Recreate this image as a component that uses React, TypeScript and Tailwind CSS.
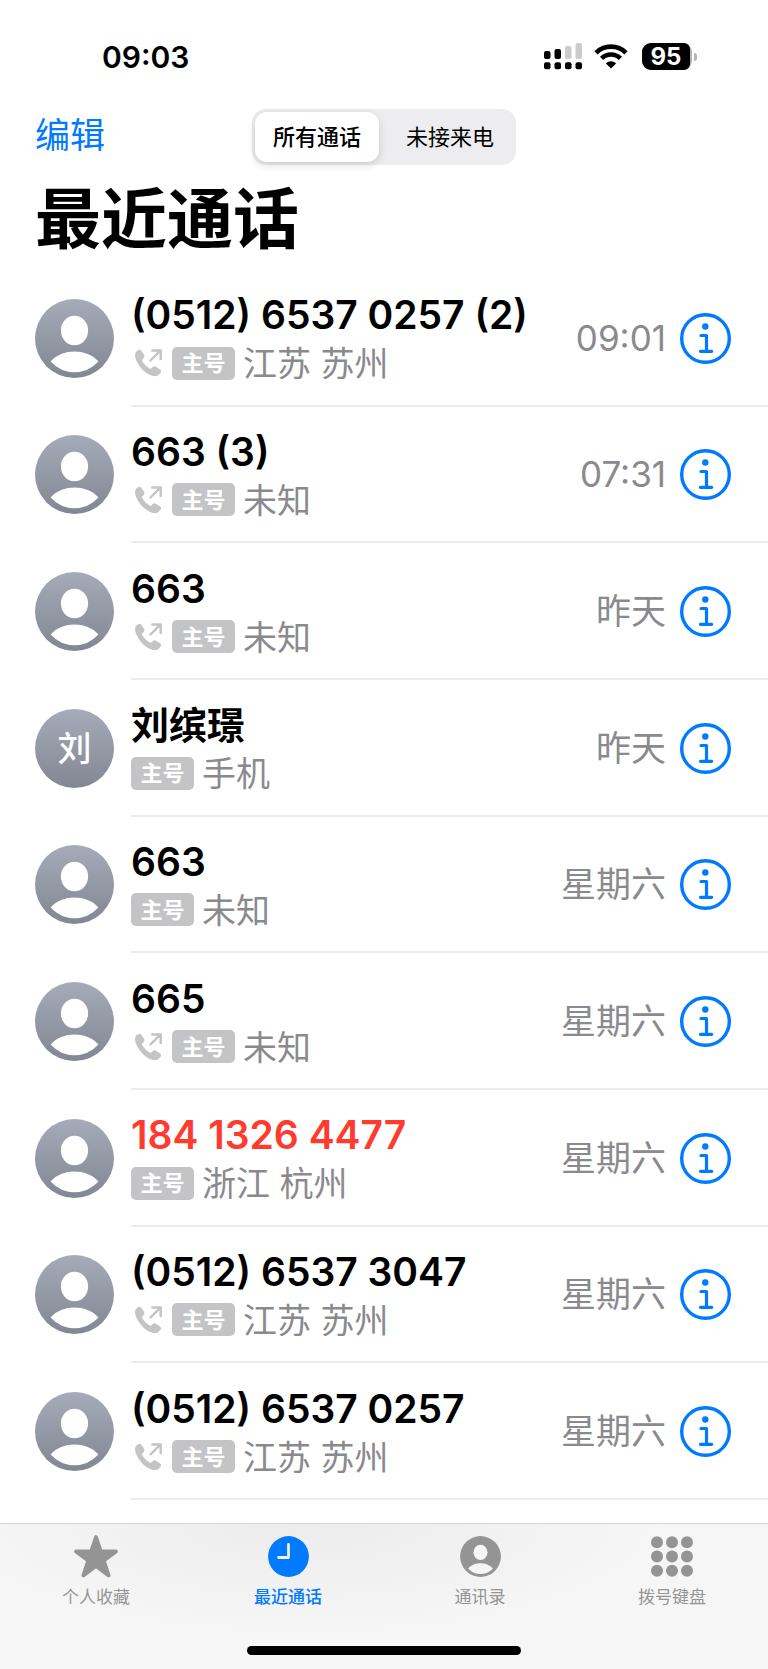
import { useState } from "react";

type Call = {
  name: string;
  count?: number;
  place: string;
  time: string;
  outgoing?: boolean;
  missed?: boolean;
  initial?: string;
};

const calls: Call[] = [
  { name: "(0512) 6537 0257", count: 2, place: "江苏 苏州", time: "09:01", outgoing: true },
  { name: "663", count: 3, place: "未知", time: "07:31", outgoing: true },
  { name: "663", place: "未知", time: "昨天", outgoing: true },
  { name: "刘缤璟", place: "手机", time: "昨天", initial: "刘" },
  { name: "663", place: "未知", time: "星期六" },
  { name: "665", place: "未知", time: "星期六", outgoing: true },
  { name: "184 1326 4477", place: "浙江 杭州", time: "星期六", missed: true },
  { name: "(0512) 6537 3047", place: "江苏 苏州", time: "星期六", outgoing: true },
  { name: "(0512) 6537 0257", place: "江苏 苏州", time: "星期六", outgoing: true },
];

const filters = [
  { label: "所有通话", width: "w-[124px]" },
  { label: "未接来电", width: "flex-1" },
];

function SignalIcon() {
  return (
    <svg width="38" height="27" viewBox="0 0 38 27" aria-hidden="true">
      <rect x="0" y="8" width="6.5" height="8" rx="2" />
      <rect x="10.5" y="6" width="6.5" height="10" rx="2" />
      <rect x="21" y="3" width="6.5" height="13" rx="2" fill="#cbcbcb" />
      <rect x="31.5" y="0" width="6.5" height="16" rx="2" fill="#cbcbcb" />
      <rect x="0" y="19.3" width="6.5" height="7" rx="2" />
      <rect x="10.5" y="19.3" width="6.5" height="7" rx="2" />
      <rect x="21" y="19.3" width="6.5" height="7" rx="2" />
      <rect x="31.5" y="19.3" width="6.5" height="7" rx="2" />
    </svg>
  );
}

function WifiIcon() {
  return (
    <svg width="34" height="25" viewBox="0 0 34 25" aria-hidden="true">
      <g fill="none" stroke="#000" strokeWidth="4.6">
        <path d="M2 8.8C10.2 .6 23.8 .6 32 8.8" />
        <path d="M7.6 14.4C12.9 9.2 21.1 9.2 26.4 14.4" />
      </g>
      <path d="M17 24.6 11.9 19.6C14.8 16.6 19.2 16.6 22.1 19.6Z" />
    </svg>
  );
}

function Battery() {
  return (
    <div className="flex items-center gap-0.5" aria-label="95%">
      <div className="w-[50px] rounded-[9px] bg-[#b5b5b5]">
        <div className="w-12 rounded-l-[9px] rounded-r-md bg-black text-center text-[24px] leading-[27px] font-bold text-white">
          95
        </div>
      </div>
      <div className="h-2 w-[3px] rounded-r-full bg-[#b5b5b5]" />
    </div>
  );
}

function PersonShape() {
  return (
    <>
      <ellipse cx="39.5" cy="31.5" rx="13.6" ry="14.8" />
      <path d="M15.6 62.5C27 49.2 52 49.2 63.4 62.5Q53.5 73.2 39.5 73.2T15.6 62.5Z" />
    </>
  );
}

function Avatar({ initial }: { initial?: string }) {
  return (
    <div className="flex size-[79px] shrink-0 items-center justify-center overflow-hidden rounded-full bg-linear-to-b from-[#a5abb9] to-[#838793] text-[34px] font-medium text-white">
      {initial ?? (
        <svg className="size-full" viewBox="0 0 79 79" fill="#fff" aria-hidden="true">
          <PersonShape />
        </svg>
      )}
    </div>
  );
}

function OutgoingIcon() {
  return (
    <svg className="ml-1 mr-2.5 shrink-0" width="27" height="28" viewBox="0 0 27 28" aria-label="呼出">
      <path
        fill="#c4c4c6"
        d="M1.2 2.8 3 1.2C4 .4 5.3.5 6.1 1.6L9 5.8c.7 1.1.6 2.2-.3 3.2L7.3 10.5c-.4.5-.4.9-.1 1.5 1.7 3 4.4 5.7 7.5 7.5.6.4 1.1.3 1.5-.1l1.6-1.4c1-.9 2.1-.9 3.2-.2l4.1 2.8c1.1.8 1.3 2 .4 3.1l-1.6 1.9c-1.8 2-4.7 2.1-8 .7C9.1 23.3 3.7 17.5.9 10.4-.3 7.2-.3 4.5 1.2 2.8Z"
      />
      <path
        d="M15.5 11.5 25.3 1.7M17.3 1.5H25.7V10"
        fill="none"
        stroke="#c4c4c6"
        strokeWidth="2.4"
        strokeLinecap="round"
        strokeLinejoin="round"
      />
    </svg>
  );
}

function InfoIcon() {
  return (
    <svg width="51" height="51" viewBox="0 0 51 51" aria-hidden="true">
      <circle cx="25.5" cy="25.5" r="23.8" fill="none" stroke="#007aff" strokeWidth="3.4" />
      <circle cx="25.3" cy="13.5" r="3.2" fill="#007aff" />
      <path
        d="M21 22.5H26.5V38M20.5 38.3H31.7"
        fill="none"
        stroke="#007aff"
        strokeWidth="3.2"
        strokeLinecap="round"
        strokeLinejoin="round"
      />
    </svg>
  );
}

function CallRow({ call }: { call: Call }) {
  return (
    <li className="flex items-stretch pl-[35px]">
      <div className="flex items-center pr-[17px]">
        <Avatar initial={call.initial} />
      </div>
      <div className="flex min-w-0 flex-1 items-center border-b-2 border-[#ebebec] pt-0.5 pr-[37px]">
        <div className="flex min-w-0 flex-1 flex-col">
          <span
            className={`truncate pt-0.5 leading-12 font-semibold ${call.initial ? "text-[38px]" : "text-[39px]"} ${
              call.missed ? "text-[#ff3b30]" : "text-black"
            }`}
          >
            {call.name}
            {call.count ? ` (${call.count})` : ""}
          </span>
          <span className="flex items-center">
            {call.outgoing && <OutgoingIcon />}
            <span className="flex h-[33px] w-[63px] shrink-0 items-center justify-center rounded-[5px] bg-[#c4c4c6] text-[22px] leading-none font-bold text-white">
              主号
            </span>
            <span className="ml-2 truncate pt-0.5 text-[34px] leading-[46px] text-[#8a8a8e]">{call.place}</span>
          </span>
        </div>
        <time className="mr-3.5 shrink-0 text-[35px] leading-none text-[#8a8a8e]">{call.time}</time>
        <button type="button" aria-label={`${call.name} 详细信息`} className="shrink-0">
          <InfoIcon />
        </button>
      </div>
    </li>
  );
}

function StarIcon() {
  return (
    <svg width="46" height="44" viewBox="0 0 46 44" aria-hidden="true">
      <path
        d="M23 2 27.8 16.4H43L30.8 25.6 35.6 40.4 23 31 10.4 40.4 15.2 25.6 3 16.4H18.2Z"
        fill="currentColor"
        stroke="currentColor"
        strokeWidth="3.8"
        strokeLinejoin="round"
      />
    </svg>
  );
}

function ClockIcon() {
  return (
    <svg width="41" height="41" viewBox="0 0 41 41" aria-hidden="true">
      <circle cx="20.5" cy="20.5" r="20.4" fill="currentColor" />
      <path
        d="M20.5 8.5V21.5H10.5"
        fill="none"
        stroke="#f1f1f1"
        strokeWidth="2.8"
        strokeLinecap="round"
        strokeLinejoin="round"
      />
    </svg>
  );
}

function ContactsIcon() {
  return (
    <svg width="41" height="41" viewBox="0 0 79 79" aria-hidden="true">
      <circle cx="39.5" cy="39.5" r="39.3" fill="currentColor" />
      <g fill="#f5f5f5">
        <PersonShape />
      </g>
    </svg>
  );
}

function KeypadIcon() {
  return (
    <svg width="42" height="41" viewBox="0 0 42 41" fill="currentColor" aria-hidden="true">
      {[6.2, 20.5, 34.8].map((cy) =>
        [6, 21, 36].map((cx) => <circle key={`${cx}-${cy}`} cx={cx} cy={cy} r="6" />),
      )}
    </svg>
  );
}

const tabs = [
  { label: "个人收藏", Icon: StarIcon },
  { label: "最近通话", Icon: ClockIcon },
  { label: "通讯录", Icon: ContactsIcon },
  { label: "拨号键盘", Icon: KeypadIcon },
];

export default function App() {
  const [filter, setFilter] = useState("所有通话");

  return (
    <div className="flex min-h-screen flex-col bg-white font-['Inter','Noto_Sans_CJK_SC',sans-serif] text-black">
      <div className="flex h-[109px] items-center justify-between pt-1 pr-[71px] pl-[102px]">
        <time className="text-[30px] leading-none font-semibold">09:03</time>
        <div className="flex items-center">
          <SignalIcon />
          <div className="mr-3.5 ml-3">
            <WifiIcon />
          </div>
          <Battery />
        </div>
      </div>

      <header className="px-[35px]">
        <div className="grid grid-cols-[1fr_auto_1fr] items-center">
          <button type="button" className="justify-self-start pb-1 text-[35px] leading-[50px] text-[#007aff]">
            编辑
          </button>
          <div className="flex h-14 w-[264px] gap-2 rounded-[14px] bg-[#ededef] p-[3px]" role="group">
            {filters.map(({ label, width }) => (
              <button
                key={label}
                type="button"
                aria-pressed={filter === label}
                onClick={() => setFilter(label)}
                className={`rounded-xl text-[22px] leading-none ${width} ${
                  filter === label ? "bg-white font-medium shadow-[0_3px_8px_rgba(0,0,0,0.14)]" : ""
                }`}
              >
                {label}
              </button>
            ))}
          </div>
        </div>
        <h1 className="h-[105px] pt-3.5 text-[66px] leading-20 font-bold">最近通话</h1>
      </header>

      <ul className="mb-[23px] grid min-h-[1230px] auto-rows-fr">
        {calls.map((call, i) => (
          <CallRow key={i} call={call} />
        ))}
      </ul>

      <nav className="mt-auto flex h-[146px] flex-col items-center justify-between border-t border-[#d3d5d6] bg-[#f6f7f8] bg-[radial-gradient(ellipse_at_40%_0%,#ececec,#f6f6f7_55%)] pb-3.5">
        <div className="grid w-full grid-cols-4">
          {tabs.map(({ label, Icon }) => (
            <a
              key={label}
              href="#"
              className={`flex flex-col items-center text-[17px] ${
                label === "最近通话" ? "font-medium text-[#007aff]" : "text-[#949494]"
              }`}
            >
              <span className="flex h-[61px] items-center pt-1">
                <Icon />
              </span>
              <span className="leading-6">{label}</span>
            </a>
          ))}
        </div>
        <div className="h-[9px] w-[274px] rounded-full bg-black" />
      </nav>
    </div>
  );
}
